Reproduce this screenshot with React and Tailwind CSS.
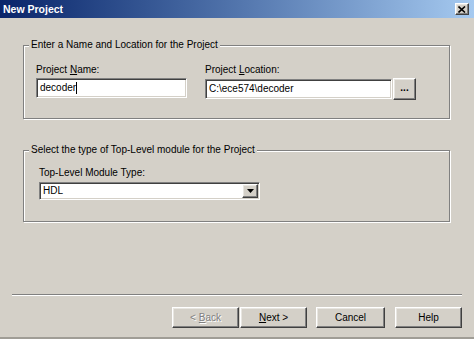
import React from "react";

const raised =
  "border border-t-white border-l-white border-b-[#404040] border-r-[#404040] shadow-[inset_-1px_-1px_0_#808080,inset_1px_1px_0_#e8e6e1] bg-[#d4d0c8]";
const sunken =
  "border border-t-[#808080] border-l-[#808080] border-b-white border-r-white shadow-[inset_1px_1px_0_#404040,inset_-1px_-1px_0_#d4d0c8] bg-white";
const etched =
  "border border-[#808080] shadow-[inset_1px_1px_0_#ffffff,1px_1px_0_#ffffff]";

function Group({ legend, className, children }) {
  return (
    <div className={`relative ml-[23px] w-[427px] ${etched} ${className}`}>
      <span className="absolute -top-[7px] left-[5px] bg-[#d4d0c8] px-[2px] leading-[12px]">
        {legend}
      </span>
      {children}
    </div>
  );
}

function Button({ children, className = "", disabled }) {
  return (
    <div
      className={`h-[21px] w-[67px] flex items-center justify-center ${raised} ${className} ${
        disabled ? "text-[#808080] [text-shadow:1px_1px_0_#ffffff]" : ""
      }`}
    >
      {children}
    </div>
  );
}

export default function App() {
  return (
    <div className="w-[474px] h-[339px] bg-[#d4d0c8] flex flex-col font-['Liberation_Sans',Arial,sans-serif] text-[10px] leading-[12px] text-black overflow-hidden">
      {/* Title bar */}
      <div className="h-[18px] shrink-0 bg-gradient-to-r from-[#0a246a] to-[#a6caf0] flex items-center justify-between pl-[3px] pr-[5px]">
        <span className="text-white font-bold text-[10.5px]">New Project</span>
        <div className={`w-[14px] h-[12px] flex items-center justify-center ${raised}`}>
          <svg width="8" height="7" viewBox="0 0 8 7">
            <path d="M0.5 0.5 L7 6.5 M7 0.5 L0.5 6.5" stroke="#000" strokeWidth="1.6" />
          </svg>
        </div>
      </div>

      {/* Group 1 */}
      <Group legend="Enter a Name and Location for the Project" className="mt-[27px] h-[74px] pt-[18px] pl-[12px]">
        <div className="flex gap-[18px]">
          <div className="flex flex-col w-[151px]">
            <span>
              Project <span className="underline">N</span>ame:
            </span>
            <div className={`mt-[2px] h-[20px] flex items-center pl-[3px] ${sunken}`}>
              <span>decoder</span>
              <span className="w-[1px] h-[12px] bg-black" />
            </div>
          </div>
          <div className="flex flex-col">
            <span>
              Project <span className="underline">L</span>ocation:
            </span>
            <div className="mt-[2px] flex items-center gap-[1px]">
              <div className={`h-[20px] w-[187px] flex items-center pl-[3px] ${sunken}`}>
                <span>C:\ece574\decoder</span>
              </div>
              <div className={`h-[22px] w-[23px] flex items-end justify-center pb-[5px] font-bold ${raised}`}>
                ...
              </div>
            </div>
          </div>
        </div>
      </Group>

      {/* Group 2 */}
      <Group legend="Select the type of Top-Level module for the Project" className="mt-[31px] h-[72px] pt-[16px] pl-[15px]">
        <div className="flex flex-col">
          <span>Top-Level Module Type:</span>
          <div className={`mt-[3px] h-[18px] w-[221px] flex items-center justify-between pl-[3px] pr-[1px] ${sunken}`}>
            <span>HDL</span>
            <div className={`w-[16px] h-[14px] flex items-center justify-center ${raised}`}>
              <svg width="7" height="4" viewBox="0 0 7 4">
                <path d="M0 0 H7 L3.5 4 Z" fill="#000" />
              </svg>
            </div>
          </div>
        </div>
      </Group>

      {/* Separator */}
      <div className="mt-[72px] ml-[12px] w-[450px] h-[2px] border-t border-t-[#808080] border-b border-b-white" />

      {/* Buttons */}
      <div className="mt-[11px] flex justify-end pr-[12px]">
        <Button disabled>
          &lt; <span className="underline ml-[3px]">B</span>ack
        </Button>
        <Button className="ml-[1px]">
          <span className="underline">N</span>ext &gt;
        </Button>
        <Button className="ml-[9px] w-[69px]">Cancel</Button>
        <Button className="ml-[10px]">Help</Button>
      </div>

      <div className="mt-auto h-[2px] bg-[#a09d96]" />
    </div>
  );
}
